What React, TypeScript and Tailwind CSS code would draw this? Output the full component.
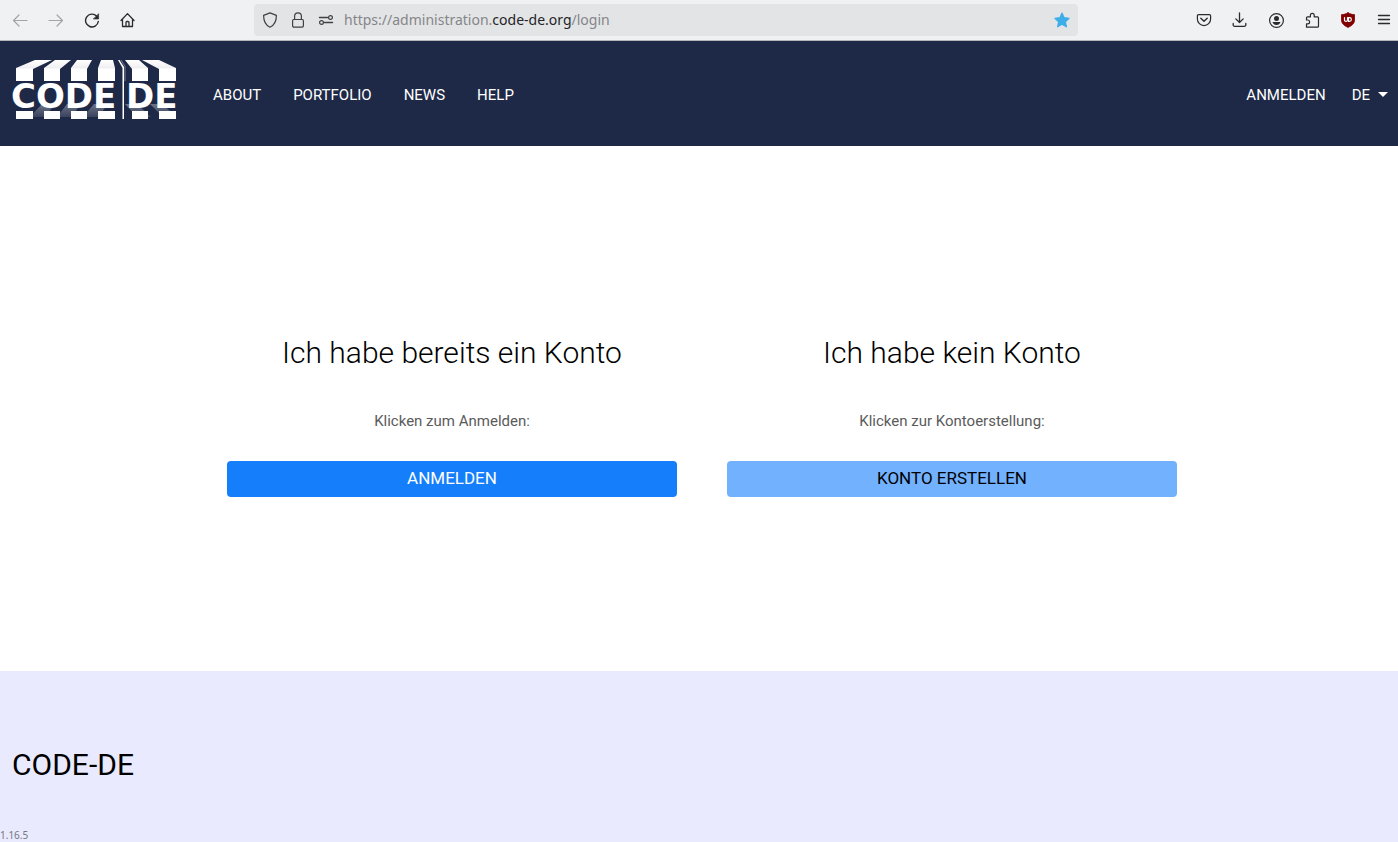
import type { ReactNode } from 'react';

const navLinks = ['About', 'Portfolio', 'News', 'Help'];

function Icon({ children, className = '' }: { children: ReactNode; className?: string }) {
  return (
    <svg
      viewBox="0 0 16 16"
      className={`size-4 shrink-0 ${className}`}
      fill="none"
      stroke="currentColor"
      strokeWidth="1.2"
      strokeLinecap="round"
      strokeLinejoin="round"
      aria-hidden="true"
    >
      {children}
    </svg>
  );
}

function ToolButton({ label, disabled, children }: { label: string; disabled?: boolean; children: ReactNode }) {
  return (
    <button type="button" aria-label={label} disabled={disabled} className="text-[#2a2b2e] disabled:text-[#a3a4a6]">
      <Icon>{children}</Icon>
    </button>
  );
}

function BrowserBar() {
  return (
    <div className="flex h-[41px] items-center border-b border-[#b5b6b9] bg-[#f0f1f3] pl-3 pr-1.5">
      <div className="flex gap-5">
        <ToolButton label="Back" disabled>
          <path d="M15 8.5H1.5M7 3 1.5 8.5 7 14" />
        </ToolButton>
        <ToolButton label="Forward" disabled>
          <path d="M1 8.5h13.5M9 3l5.500 5.500L9 14" />
        </ToolButton>
        <ToolButton label="Reload">
          <path d="M14.300 9.500A6.400 6.400 0 1 1 12.500 4" strokeWidth="1.400" />
          <path d="M14.600 2v5H9.600z" fill="currentColor" strokeWidth="0.600" />
        </ToolButton>
        <ToolButton label="Home">
          <path d="M1 8.500 7.500 1.600 14 8.500M2.500 7.500v7h10v-7M6 14.500v-4a1 1 0 0 1 1-1h1a1 1 0 0 1 1 1v4" strokeWidth="1.300" />
        </ToolButton>
      </div>

      <div className="mx-[118px] flex h-8 min-w-0 flex-1 items-center rounded bg-[#e3e4e6] px-2 text-[#3f4043]">
        <div className="flex gap-3">
          <Icon>
            <path d="M8 .9 14.400 3.400c0 5.600-2 9.700-6.400 11.800C3.600 13.100 1.600 9 1.600 3.400z" />
          </Icon>
          <Icon>
            <rect x="2.600" y="7.500" width="10.800" height="7.600" rx="1.300" />
            <path d="M4.600 7.500V4.200a3.400 3.400 0 0 1 6.800 0v3.300" />
          </Icon>
          <Icon>
            <path d="M1.500 5.500h8M6.500 10.500h8" strokeWidth="1.400" />
            <circle cx="12.500" cy="5.500" r="1.900" />
            <circle cx="3.500" cy="10.500" r="1.900" />
          </Icon>
        </div>
        <div className="ml-2.5 flex-1 truncate font-['Noto_Sans',sans-serif] text-sm text-[#858689]">
          https://administration.<span className="text-[#242528]">code-de.org</span>/login
        </div>
        <button type="button" aria-label="Edit bookmark" className="text-[#3daee9]">
          <Icon>
            <path
              d="m8 1 2.100 4.700 5 .6-3.700 3.500 1 5L8 12.300l-4.400 2.500 1-5L.9 6.300l5-.6z"
              fill="currentColor"
            />
          </Icon>
        </button>
      </div>

      <div className="flex gap-5">
        <ToolButton label="Save to Pocket">
          <path d="M2.600 2.600h10.800a1.200 1.200 0 0 1 1.200 1.200V7a6.600 6.600 0 0 1-13.200 0V3.800a1.200 1.200 0 0 1 1.200-1.200z" />
          <path d="M4.800 6.200 8 9.300l3.200-3.100" strokeWidth="1.400" />
        </ToolButton>
        <ToolButton label="Downloads">
          <path d="M7.500 .8v9.700M3.800 6.900l3.700 3.600 3.700-3.600M1.200 11.500v1.400a1.400 1.400 0 0 0 1.400 1.400h9.800a1.400 1.400 0 0 0 1.400-1.400v-1.400" strokeWidth="1.300" />
        </ToolButton>
        <ToolButton label="Account">
          <circle cx="8.500" cy="8.500" r="6.900" />
          <circle cx="8.500" cy="6.400" r="2.500" fill="currentColor" stroke="none" />
          <path d="M4.500 10h8a4.200 4.200 0 0 1-8 0z" fill="currentColor" stroke="none" />
        </ToolButton>
        <ToolButton label="Extensions">
          <path d="M2.500 15.200v-3.400h1.200a1.900 1.900 0 0 0 0-3.800H2.500V5.800a1 1 0 0 1 1-1h2.900V3.200a1.900 1.900 0 0 1 3.800 0v1.600h3.300a1 1 0 0 1 1 1v8.400a1 1 0 0 1-1 1z" />
        </ToolButton>
        <ToolButton label="uBlock Origin">
          <path d="M8 .8c2 1.200 4 1.700 6.500 1.800V8c0 3.500-2.500 5.600-6.500 7.400C4 13.600 1.500 11.500 1.500 8V2.600C4 2.500 6 2 8 .8z" fill="#800000" stroke="#800000" strokeWidth="0.800" />
          <path d="M4.500 5.700v2.200a1.500 1.500 0 0 0 3 0V5.700" stroke="#fff" />
          <path d="M8.500 5.700h1a1.850 1.850 0 0 1 0 3.700h-1z" stroke="#fff" />
        </ToolButton>
        <ToolButton label="Menu">
          <path d="M2.500 3.500h11M2.500 7.500h11M2.500 11.500h11" strokeWidth="1.300" />
        </ToolButton>
      </div>
    </div>
  );
}

function Logo() {
  return (
    <svg viewBox="0 0 170 60" className="h-[60px] w-[170px]" role="img" aria-label="CODE-DE">
      <defs>
        <linearGradient id="shade" x1="0" y1="0" x2="0" y2="1">
          <stop offset="0" stopColor="#fff" stopOpacity="0.350" />
          <stop offset="1" stopColor="#fff" stopOpacity="0.120" />
        </linearGradient>
        <linearGradient id="slat" gradientUnits="userSpaceOnUse" x1="0" y1="0" x2="0" y2="9">
          <stop offset="0" stopColor="#fff" />
          <stop offset="1" stopColor="#ededf0" />
        </linearGradient>
      </defs>
      {/* striped awning */}
      <g fill="url(#slat)">
        <path d="M23 0h17L21 9H4V8z" />
        <path d="M43 0h16L48 9H32V8z" />
        <path d="M65 0h15l-5 9H59V8z" />
        <path d="M89 0h12l2 8v1H86V8z" />
        <path d="M113 0h14l9 8v1h-16z" />
        <path d="M130 0h17l17 8v1h-17z" />
      </g>
      {/* shadow below the lettering */}
      <g fill="url(#shade)">
        <path d="M30 44h14L32 57H18zM55 44h14L59 57H45zM82 44h14L86 57H71zM113 44h12l14 13h-14zM138 44h12l15 13h-14z" />
      </g>
      <g fill="#fff">
        <path d="M4 8.500h17V21H4zM32 8.500h16V21H32zM59 8.500h16V21H59zM86 8.500h17V21H86zM120 8.500h16V21h-16zM147 8.500h17V21h-17z" />
        <path d="M4 51h17v8H4zM32 51h16v8H32zM59 51h16v8H59zM86 51h17v8H86zM120 51h16v8h-16zM147 51h17v8h-17z" />
        <path d="M106 0h1.500L112 7v52h-1.500V8z" />
      </g>
      <path d="m109 0 4 6.500V21" fill="none" stroke="#fff" strokeOpacity="0.600" strokeWidth="0.700" />
      <g fill="#fff" className="font-['DejaVu_Sans',sans-serif] text-[34px] font-bold">
        <text x="-1" y="48">CODE</text>
        <text x="114" y="48">DE</text>
      </g>
    </svg>
  );
}

function Header() {
  return (
    <header className="flex h-[105px] items-center bg-[#1e2947] pl-3 pr-2.5 text-[15px] leading-6 uppercase text-white">
      <a href="#home" className="mb-2">
        <Logo />
      </a>
      <nav className="ml-[31px] flex gap-8 pt-0.5">
        {navLinks.map((link) => (
          <a key={link} href={`#${link.toLowerCase()}`}>
            {link}
          </a>
        ))}
      </nav>
      <div className="ml-auto flex items-center gap-[26px] pt-0.5">
        <a href="#login">Anmelden</a>
        <button type="button" className="flex items-center gap-2 uppercase">
          DE
          <svg viewBox="0 0 10 5" className="h-[5px] w-2.5" fill="currentColor" aria-hidden="true">
            <path d="M0 0h10L5 5z" />
          </svg>
        </button>
      </div>
    </header>
  );
}

interface AccountOptionProps {
  title: string;
  hint: string;
  action: string;
  buttonClass: string;
}

function AccountOption({ title, hint, action, buttonClass }: AccountOptionProps) {
  return (
    <section className="flex max-w-[450px] flex-1 flex-col text-center">
      <h2 className="text-[30px] leading-10 font-light text-black">{title}</h2>
      <p className="mt-9 text-[15px] leading-6 text-[#5b5b5b]">{hint}</p>
      <button type="button" className={`mt-7 h-9 rounded text-[17px] uppercase ${buttonClass}`}>
        {action}
      </button>
    </section>
  );
}

export default function App() {
  return (
    <div className="flex min-h-screen flex-col bg-white font-[Roboto,sans-serif]">
      <BrowserBar />
      <Header />
      <main className="flex min-h-[525px] items-center justify-center gap-[50px] pl-1.5 pt-3">
        <AccountOption
          title="Ich habe bereits ein Konto"
          hint="Klicken zum Anmelden:"
          action="Anmelden"
          buttonClass="bg-[#147efb] text-white"
        />
        <AccountOption
          title="Ich habe kein Konto"
          hint="Klicken zur Kontoerstellung:"
          action="Konto erstellen"
          buttonClass="bg-[#72b1fe] text-black"
        />
      </main>
      <footer className="flex flex-1 flex-col justify-between bg-[#e9eafe]">
        <h3 className="pl-3 pt-[74px] text-[30px] leading-10 text-black">CODE-DE</h3>
        <span className="font-['Noto_Sans',sans-serif] text-[10px] leading-[14px] text-[#77777f]">1.16.5</span>
      </footer>
    </div>
  );
}
